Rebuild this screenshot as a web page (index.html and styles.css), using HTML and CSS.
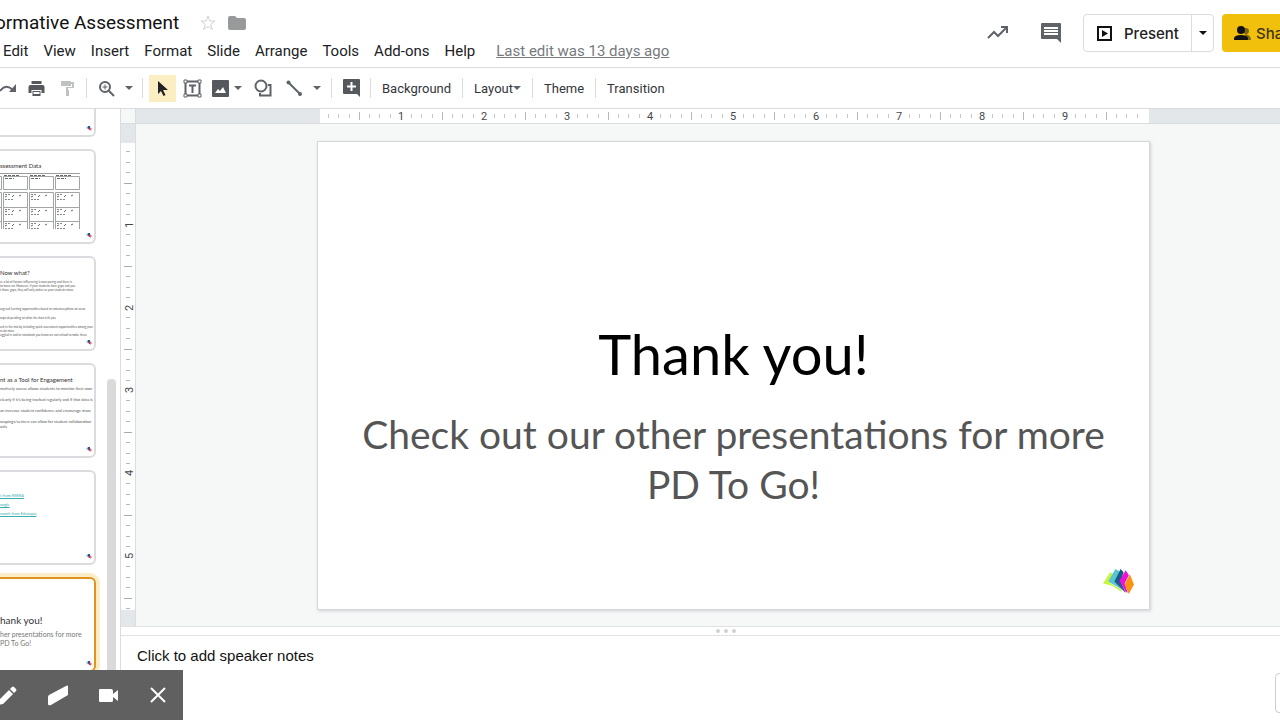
FILE: index.html
```html
<!DOCTYPE html>
<html lang="en">
<head>
<meta charset="utf-8">
<title>Formative Assessment</title>
<link rel="stylesheet" href="styles.css">
</head>
<body>
<svg class="defs" aria-hidden="true">
  <symbol id="logo" viewBox="0 0 30 24">
    <path fill="#c6f53c" d="M0 14 7 3l3 2-4 8 12 7v2L9 16z"/>
    <path fill="#5bc4d1" d="M5 12 12 0l4 2-4 9 8 10-3-2z"/>
    <path fill="#125c86" d="M11 12 17 0l3 3-3 9 5 11z"/>
    <path fill="#6a3fa8" d="m16 13 6 10-3-3-5-8z"/>
    <path fill="#ee0fd8" d="m16 11 6-10 3 5-4 8 3 9-2-1z"/>
    <path fill="#fa9212" d="m21 15 5-10 4 10-5 9z"/>
  </symbol>
  <symbol id="dot" viewBox="0 0 6 6">
    <path fill="#58c9a0" d="M0 3 2 1v3z"/><path fill="#3b4aa0" d="M2 1h2v3H2z"/><path fill="#b82fae" d="M2 3h2v2H3z"/><path fill="#e8703c" d="m4 2 2 2-2 2z"/>
  </symbol>
</svg>

<header class="header">
  <div class="doc">
    <div class="title-row">
      <h1 class="title">ormative Assessment</h1>
      <button class="icon-btn" aria-label="Star"><svg width="18" height="18" viewBox="0 0 18 18"><path d="m9 2 1.800 5H16l-4.200 3.200 1.600 5.300L9 12.300l-4.400 3.200 1.600-5.300L2 7h5.200z" fill="none" stroke="#d0d2d4"/></svg></button>
      <button class="icon-btn" aria-label="Move"><svg width="18" height="16" viewBox="0 0 18 16"><path d="M2 1h5l2 2h7q2 0 2 2v8q0 2-2 2H2q-2 0-2-2V3q0-2 2-2z" fill="#97999b"/></svg></button>
    </div>
    <nav class="menu">
      <button>Edit</button><button>View</button><button>Insert</button><button>Format</button><button>Slide</button><button>Arrange</button><button>Tools</button><button>Add-ons</button><button>Help</button>
      <a class="last-edit" href="#">Last edit was 13 days ago</a>
    </nav>
  </div>
  <div class="actions">
    <button class="icon-btn" aria-label="Activity"><svg width="22" height="14" viewBox="0 0 22 14"><path d="m1 12 6-6 4 4 8-8M14 1h6v6" fill="none" stroke="#5f6368" stroke-width="2"/></svg></button>
    <button class="icon-btn" aria-label="Comments"><svg width="22" height="22" viewBox="0 0 22 22"><path d="M2 1h18q1 0 1 1v19l-4-4H2q-1 0-1-1V2q0-1 1-1z" fill="#5f6368"/><path d="M4 5h14v2H4zM4 8h14v2H4zM4 11h14v2H4z" fill="#fff"/></svg></button>
    <div class="present">
      <button class="present-main"><svg width="15" height="15" viewBox="0 0 15 15"><path d="M1 1h13v13H1z" fill="none" stroke="#111" stroke-width="2"/><path d="m5 4 6 3.500L5 11z" fill="#111"/></svg>Present</button>
      <button class="present-more" aria-label="Present options"><svg width="8" height="4" viewBox="0 0 8 4"><path d="M0 0h8L4 4z" fill="#111"/></svg></button>
    </div>
    <button class="share"><svg width="18" height="14" viewBox="0 0 18 14"><circle cx="12" cy="5" r="3" fill="#7d6613"/><path d="M11 8q6 1 6 6h-5z" fill="#7d6613"/><circle cx="7" cy="4" r="4" fill="#111"/><path d="M0 14v-2q1-3 7-3t7 3v2z" fill="#111"/></svg>Share</button>
  </div>
</header>

<div class="toolbar">
  <button class="tool redo" aria-label="Redo"><svg width="16" height="10" viewBox="0 0 16 10"><path d="M0 8q6-8 13-1" fill="none" stroke="#5f6368" stroke-width="2"/><path d="M16 1v8H9z" fill="#5f6368"/></svg></button>
  <button class="tool print" aria-label="Print"><svg width="17" height="15" viewBox="0 0 16 15"><path d="M3 0h10v3H3zM2 4h12q2 0 2 2v6h-3V9H3v3H0V6q0-2 2-2zM4 10h8v5H4z" fill="#55585c"/><path d="M5 11h6v2H5z" fill="#fff"/></svg></button>
  <button class="tool paint" aria-label="Paint format"><svg width="15" height="16" viewBox="0 0 15 16"><path d="M1 1h10v1h3v6H8v2h1v6H6V7h6V4h-1v2H1z" fill="#bfc1c3"/></svg></button>
  <span class="sep"></span>
  <button class="tool zoom" aria-label="Zoom"><svg width="17" height="17" viewBox="0 0 17 17"><circle cx="7" cy="7" r="5" fill="none" stroke="#5f6368" stroke-width="2"/><path d="m10 10 6 6" stroke="#5f6368" stroke-width="2"/><path d="M4.500 7h5M7 4.500v5" stroke="#5f6368"/></svg><svg width="8" height="4" viewBox="0 0 8 4"><path d="M0 0h8L4 4z" fill="#5f6368"/></svg></button>
  <span class="sep"></span>
  <button class="tool select" aria-label="Select"><svg width="12" height="17" viewBox="0 0 12 17"><path d="M1 1v13l3-3 2.500 5 2-1L6 10h5z" fill="#202124"/></svg></button>
  <button class="tool textbox" aria-label="Text box"><svg width="19" height="19" viewBox="0 0 19 19"><path d="M2.500 2.500h14v14h-14z" fill="none" stroke="#5f6368" stroke-width="2"/><path d="M1 1h3v3H1zM15 1h3v3h-3zM1 15h3v3H1zM15 15h3v3h-3z" fill="#fff" stroke="#5f6368"/><path d="M6 6.500h7M9.500 6v8" stroke="#5f6368" stroke-width="2"/></svg></button>
  <button class="tool image" aria-label="Image"><svg width="17" height="17" viewBox="0 0 17 17"><rect width="17" height="17" rx="1" fill="#55585c"/><path d="m3 13 3-4 2 2 3-4 3 6z" fill="#fff"/></svg><svg width="8" height="4" viewBox="0 0 8 4"><path d="M0 0h8L4 4z" fill="#5f6368"/></svg></button>
  <button class="tool shape" aria-label="Shape"><svg width="18" height="18" viewBox="0 0 18 18"><circle cx="7" cy="7" r="5.500" fill="none" stroke="#5f6368" stroke-width="2"/><path d="M14 6h2.500v10.500H6V14" fill="none" stroke="#5f6368" stroke-width="2"/></svg></button>
  <button class="tool line" aria-label="Line"><svg width="17" height="17" viewBox="0 0 17 17"><path d="m2 2 13 13" stroke="#5f6368" stroke-width="2"/><circle cx="2.500" cy="2.500" r="2" fill="#5f6368"/><circle cx="14" cy="14" r="2" fill="#5f6368"/></svg><svg width="8" height="4" viewBox="0 0 8 4"><path d="M0 0h8L4 4z" fill="#5f6368"/></svg></button>
  <span class="sep"></span>
  <button class="tool comment" aria-label="Add comment"><svg width="17" height="18" viewBox="0 0 17 18"><path d="M1 0h15q1 0 1 1v17l-3-3H1q-1 0-1-1V1q0-1 1-1z" fill="#55585c"/><path d="M4 7.500h9M8.500 3v9" stroke="#fff" stroke-width="2"/></svg></button>
  <span class="sep"></span>
  <button class="label">Background</button>
  <span class="sep"></span>
  <button class="label">Layout<svg width="8" height="4" viewBox="0 0 8 4"><path d="M0 0h8L4 4z" fill="#5f6368"/></svg></button>
  <span class="sep"></span>
  <button class="label">Theme</button>
  <span class="sep"></span>
  <button class="label">Transition</button>
</div>

<div class="workspace">
  <aside class="filmstrip">
    <div class="thumbs">
      <div class="thumb partial"><svg class="mark"><use href="#dot"/></svg></div>
      <div class="thumb">
        <h2>ssessment Data</h2>
        <svg class="sheet" width="80" height="57" viewBox="0 0 80 57">
          <defs><g id="column">
            <path d="M.5 3.500h24v13H.5zM.5 19.500h24V56M.5 19.500V56M.5 34.500h24M.5 48.500h24" fill="none" stroke="#a2a5a7"/>
            <path d="M1 2.500h15M2 5.500h9" stroke="#666" stroke-dasharray="3 1"/>
            <path d="M2 21.500h6M2 26.500h8M2 36.500h6M2 41.500h9M2 50.500h5M2 55.500h9" stroke="#888" stroke-dasharray="2 1"/>
            <path d="m2 24 2-1m5 1 2-2m5 1 2-1M2 39l2-1m5 1 2-2m5 1 2-1M2 53l2-1m5 1 2-2m5 1 2-1" stroke="#666"/>
          </g></defs>
          <path d="M0 .5h80" stroke="#9a9c9e"/>
          <use href="#column" x="-23"/><use href="#column" x="3"/><use href="#column" x="29"/><use href="#column" x="55"/>
        </svg>
        <svg class="mark"><use href="#dot"/></svg>
      </div>
      <div class="thumb">
        <h2>Now what?</h2>
        <p class="fine">re a lot of factors influencing lesson pacing and there is</p>
        <p class="fine">to move on. However, if your students have gaps and you</p>
        <p class="fine">t those gaps, they will only widen as your students move</p>
        <p class="fine gap-l">argeted learning opportunities based on misconceptions on areas</p>
        <p class="fine gap-s">oups depending on what the data tells you</p>
        <p class="fine gap-s">ack in the mix by including quick assessment opportunities among your</p>
        <p class="fine">ss do more</p>
        <p class="fine">uggled in and/or standards you know are not school to make these</p>
        <svg class="mark"><use href="#dot"/></svg>
      </div>
      <div class="thumb">
        <h2>nt as a Tool for Engagement</h2>
        <p class="small">matively assess allows students to monitor their own</p>
        <p class="small">clearly if it's being tracked regularly and if that data is</p>
        <p class="small">an increase student confidence and encourage more</p>
        <p class="small">roupings/centers can allow for student collaboration</p>
        <p class="small tail">oals</p>
        <svg class="mark"><use href="#dot"/></svg>
      </div>
      <div class="thumb links">
        <a href="#">t from NWEA</a>
        <a href="#">oogle</a>
        <a href="#">rowth from Edutopia</a>
        <svg class="mark"><use href="#dot"/></svg>
      </div>
      <div class="thumb active">
        <p class="thanks">hank you!</p>
        <p class="sub">her presentations for more</p>
        <p class="sub">PD To Go!</p>
        <svg class="mark"><use href="#dot"/></svg>
      </div>
    </div>
    <div class="scroll"><div class="handle"></div></div>
  </aside>

  <main class="editor">
    <div class="ruler-row">
      <div class="corner"></div>
      <div class="ruler-h">
        <svg class="scale-h" width="829" height="14">
          <defs><pattern id="inch" width="83" height="14" patternUnits="userSpaceOnUse">
            <path d="M8.500 5v4M18.500 5v4M29.500 5v4M49.500 5v4M59.500 5v4M70.500 5v4" stroke="#c3c6c8"/><path d="M39.500 3v8" stroke="#b6b9bb"/>
          </pattern></defs>
          <rect width="829" height="14" fill="url(#inch)"/>
          <g class="digits"><text x="81" y="11">1</text><text x="164" y="11">2</text><text x="247" y="11">3</text><text x="330" y="11">4</text><text x="413" y="11">5</text><text x="496" y="11">6</text><text x="579" y="11">7</text><text x="662" y="11">8</text><text x="745" y="11">9</text></g>
        </svg>
      </div>
    </div>
    <div class="stage">
      <div class="ruler-v">
        <svg class="scale-v" width="14" height="467">
          <defs><pattern id="inch-v" width="14" height="83" patternUnits="userSpaceOnUse">
            <path d="M5 8.500h4M5 19.500h4M5 29.500h4M5 50.500h4M5 61.500h4M5 71.500h4" stroke="#b6b9bb"/><path d="M3 40.500h8" stroke="#a9acae"/>
          </pattern></defs>
          <rect width="14" height="467" fill="url(#inch-v)"/>
          <g class="digits"><text transform="translate(12 82) rotate(-90)">1</text><text transform="translate(12 165) rotate(-90)">2</text><text transform="translate(12 247) rotate(-90)">3</text><text transform="translate(12 330) rotate(-90)">4</text><text transform="translate(12 413) rotate(-90)">5</text></g>
        </svg>
      </div>
      <div class="canvas">
        <section class="slide">
          <h2 class="slide-title">Thank you!</h2>
          <p class="slide-sub">Check out our other presentations for more<br>PD To Go!</p>
          <svg class="brand" width="31" height="25"><use href="#logo"/></svg>
        </section>
      </div>
    </div>
    <div class="splitter"><i></i><i></i><i></i></div>
    <div class="notes">
      <p>Click to add speaker notes</p>
      <button class="explore" aria-label="Explore"></button>
    </div>
  </main>
</div>

<div class="recorder">
  <button aria-label="Pen"><svg width="22" height="22" viewBox="0 0 22 22"><path d="m1 21 1-5L12 6l4 4L6 20zM13 5l2-2q1-1 2 0l2 2q1 1 0 2l-2 2z" fill="#fff"/></svg></button>
  <button aria-label="Eraser"><svg width="22" height="22" viewBox="0 0 22 22"><path d="m2 11 17-9q2-1 2 0v9L4 21q-3 1-3-1v-7q0-1 1-2z" fill="#fff"/></svg></button>
  <button aria-label="Camera"><svg width="22" height="22" viewBox="0 0 22 22"><path d="M3 5h11q2 0 2 2v3l5-4v11l-5-4v4q0 1-2 1H3q-1 0-1-1V6q0-1 1-1z" fill="#fff"/></svg></button>
  <button aria-label="Close"><svg width="22" height="22" viewBox="0 0 22 22"><path d="m4 4 14 14M18 4 4 18" stroke="#fff" stroke-width="2"/></svg></button>
</div>
</body>
</html>
```

FILE: styles.css
```css
* { box-sizing: border-box; }
html, body { height: 100%; }
body {
  margin: 0;
  display: flex;
  flex-direction: column;
  overflow: hidden;
  background: #fff;
  color: #202124;
  font-family: Roboto, "Liberation Sans", sans-serif;
}
h1, h2, p { margin: 0; font-weight: 400; }
svg { display: block; flex: none; }
button {
  padding: 0;
  border: 0;
  background: none;
  color: inherit;
  font: inherit;
  display: flex;
  align-items: center;
  white-space: nowrap;
}
.defs { position: absolute; width: 0; height: 0; }

/* Header */
.header {
  flex: none;
  height: 68px;
  display: flex;
  justify-content: space-between;
  border-bottom: 1px solid #dadce0;
}
.title-row { display: flex; align-items: center; height: 24px; margin-top: 11px; }
.title { font-size: 19px; line-height: 24px; margin: 0 20px 0 -5px; white-space: nowrap; color: #111; }
.title-row .icon-btn { margin-right: 11px; }
.menu { display: flex; gap: 15px; padding-left: 3px; margin-top: 6px; font-size: 15px; line-height: 20px; }
.last-edit { margin-left: 6px; color: #777a7d; white-space: nowrap; }
.actions { display: flex; align-items: center; height: 66px; margin-right: -24px; }
.actions > .icon-btn { margin-right: 31px; }
.present {
  display: flex;
  height: 38px;
  width: 131px;
  margin: 0 8px 0 -10px;
  border: 1px solid #dadce0;
  border-radius: 4px;
  font: 500 15px Inter, Roboto, sans-serif;
}
.present-main { flex: 1; padding-left: 13px; gap: 12px; }
.present-more { width: 22px; justify-content: center; border-left: 1px solid #dadce0; }
.share {
  width: 82px;
  height: 38px;
  padding-left: 12px;
  gap: 4px;
  border-radius: 4px;
  background: #f1c00c;
  font: 500 15px Inter, Roboto, sans-serif;
  color: #3c3410;
}

/* Toolbar */
.toolbar {
  flex: none;
  height: 41px;
  display: flex;
  align-items: center;
  border-bottom: 1px solid #dadce0;
  font-size: 13px;
  color: #333639;
}
.tool { height: 27px; }
.tool svg + svg { margin-left: 5px; }
.redo { margin-right: 12px; }
.print { margin-right: 15px; }
.paint { margin-right: 11px; }
.sep { width: 1px; height: 20px; background: #dadce0; }
.zoom { margin: 0 9px 0 11px; }
.zoom svg + svg { margin-left: 10px; }
.select { width: 27px; justify-content: center; margin: 0 7px 0 6px; background: #fbeec2; }
.textbox { margin-right: 10px; }
.image { margin-right: 12px; }
.shape { margin-right: 14px; }
.line { margin-right: 10px; }
.line svg + svg { margin-left: 10px; }
.comment { margin: 0 10px 0 11px; }
.label { margin: 0 11px; }

/* Slide list */
.workspace { flex: 1; min-height: 0; display: flex; }
.filmstrip { flex: none; width: 121px; display: flex; overflow: hidden; border-right: 1px solid #dadce0; }
.thumbs { flex: none; width: 96px; display: flex; flex-direction: column; gap: 12px; font-family: Lato, sans-serif; color: #333; }
.thumb {
  position: relative;
  flex: none;
  height: 95px;
  padding-top: 10px;
  border: 2px solid #dadcdf;
  border-left: 0;
  border-radius: 0 6px 6px 0;
  background: #fff;
  white-space: nowrap;
}
.thumb.partial { height: 28px; border-top: 0; border-radius: 0 0 6px 0; }
.thumb h2 { font-size: 6px; line-height: 10px; margin-bottom: 2px; }
.mark { position: absolute; right: 2px; bottom: 4px; width: 6px; height: 6px; }
.fine { font-size: 3px; line-height: 4px; color: #555; }
.gap-l { margin-top: 15px; }
.gap-s { margin-top: 5px; }
.small { font-size: 4px; line-height: 4px; margin-bottom: 7px; color: #555; }
.small.tail { margin-top: -6px; }
.links { display: flex; flex-direction: column; gap: 4px; padding-top: 21px; font-size: 4px; line-height: 5px; }
.links a { color: #3aaeb0; }
.thumb.active { padding-top: 35px; border-color: #e0931f; box-shadow: 0 0 0 4px #fbedc6; }
.thanks { font-size: 10px; line-height: 12px; }
.sub { font-size: 7px; line-height: 9px; color: #777; }
.thanks + .sub { margin-top: 4px; }
.scroll { flex: 1; padding: 270px 0 0 11px; display: flex; }
.handle { width: 9px; border-radius: 4px 4px 0 0; background: #dadada; }

/* Editor */
.editor { flex: 1; min-width: 0; display: flex; flex-direction: column; }
.ruler-row { flex: none; height: 15px; display: flex; border-bottom: 1px solid #dadce0; }
.corner { width: 15px; background: #f6f8f8; border-right: 1px solid #dadce0; }
.ruler-h { flex: 1; padding-left: 184px; background: #e4e7ea; overflow: hidden; }
.scale-h, .scale-v { background: #fff; }
.digits { font-size: 11px; text-anchor: middle; fill: #44474a; }
.stage { flex: 1; min-height: 0; display: flex; }
.ruler-v { flex: none; width: 15px; padding-top: 19px; background: #e4e7ea; border-right: 1px solid #dadce0; }
.canvas { flex: 1; min-width: 0; padding: 17px 0 0 181px; background: #f6f8f8; overflow: hidden; }
.slide {
  position: relative;
  width: 833px;
  aspect-ratio: 16 / 9;
  padding-top: 178px;
  border: 1px solid #d5d7d9;
  background: #fff;
  box-shadow: 1px 1px 3px #cfd1d3;
  font-family: Lato, sans-serif;
  text-align: center;
}
.slide-title { font-size: 56px; line-height: 68px; color: #000; }
.slide-sub { margin-top: 21px; font-size: 39px; line-height: 50px; color: #555; white-space: nowrap; }
.brand { position: absolute; right: 15px; bottom: 15px; }
.splitter {
  flex: none;
  height: 10px;
  display: flex;
  align-items: center;
  justify-content: center;
  gap: 4px;
  padding-left: 50px;
  border: 1px solid #e0e2e4;
  border-width: 1px 0;
}
.splitter i { width: 4px; height: 4px; border-radius: 2px; background: #d0d2d4; }
.notes {
  flex: none;
  height: 84px;
  display: flex;
  justify-content: space-between;
  padding: 10px 0 0 16px;
  overflow: hidden;
  font: 15px/20px "Liberation Sans", Arial, sans-serif;
  color: #111;
}
.explore { flex: none; width: 40px; height: 40px; margin: 27px -35px 0 0; border: 1px solid #ccced0; border-radius: 4px; }

/* Recording controls float over the page corner */
.recorder {
  position: fixed;
  left: 0;
  bottom: 0;
  width: 183px;
  height: 50px;
  display: flex;
  align-items: center;
  gap: 28px;
  background: #606060;
}
.recorder button:first-child { margin-left: -3px; }
```
